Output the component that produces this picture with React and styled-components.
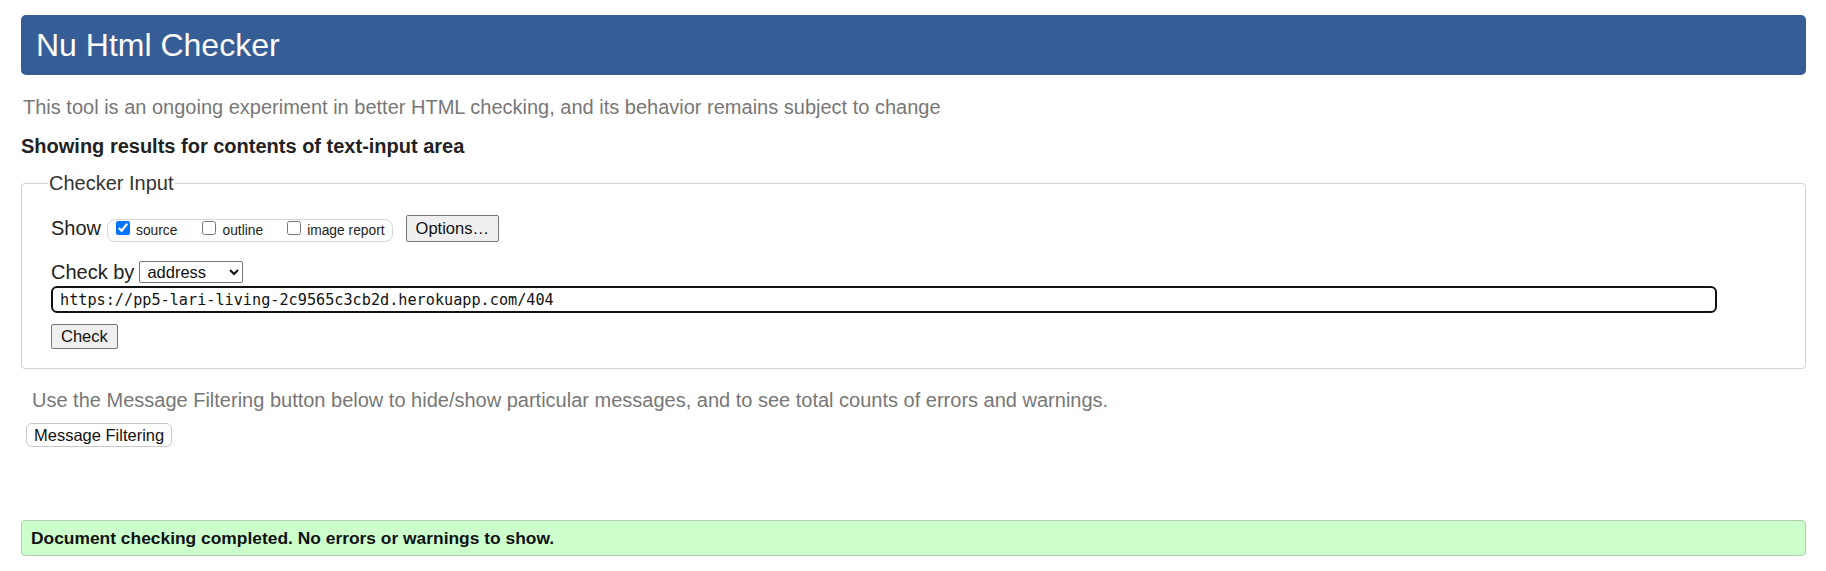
import React from 'react';
import styled, { createGlobalStyle } from 'styled-components';

const GlobalStyle = createGlobalStyle`
  body {
    margin: 0;
    background: #ffffff;
    font-family: "Liberation Sans", Arial, sans-serif;
    color: #222;
  }
`

const Page = styled.div`
  padding: 15px 20px 0 21px;
`

const Header = styled.h1`
  margin: 0;
  height: 60px;
  line-height: 60px;
  padding-left: 15px;
  background-color: #365d95;
  border-radius: 5px;
  color: #ffffff;
  font-size: 32px;
  font-weight: normal;
`

const Intro = styled.p`
  margin: 21px 0 0 2px;
  font-size: 20px;
  line-height: 23px;
  color: #777;
`

const Results = styled.h2`
  margin: 16px 0 0 0;
  font-size: 20px;
  line-height: 23px;
  font-weight: bold;
  color: #222;
`

const Fieldset = styled.fieldset`
  margin: 14px 0 0 0;
  padding: 0 24px 19px 29px;
  border: 1px solid #d2d2d2;
  border-radius: 4px;
`

const Legend = styled.legend`
  padding: 0 1px;
  margin-left: -3px;
  font-size: 20px;
  line-height: 23px;
  color: #333;
`

const Row = styled.div`
  display: flex;
  align-items: center;
  height: ${p => p.$height || 27}px;
  margin-top: ${p => p.$top || 0}px;
  font-size: 20px;
  color: #222;
`

const Label = styled.span`
  margin-right: ${p => p.$gap || 5}px;
`

const OptionGroup = styled.div`
  display: flex;
  align-items: center;
  box-sizing: border-box;
  height: 23px;
  margin-top: 3px;
  padding: 0 7px 0 8px;
  border: 1px solid #d6d6d6;
  border-radius: 8px;
  margin-right: 13px;
`

const Option = styled.label`
  display: flex;
  align-items: center;
  gap: 6px;
  font-size: 13.8px;
  color: #222;
  margin-right: ${p => p.$gap || 0}px;

  input {
    margin: 0 0 4px 0;
    width: 14px;
    height: 14px;
    accent-color: #0075ff;
  }
`

const Button = styled.button`
  box-sizing: border-box;
  font-family: "Liberation Sans", Arial, sans-serif;
  font-size: 16.5px;
  height: ${p => p.$height || 26}px;
  padding: 0 ${p => p.$pad || 8}px;
  color: #111;
  background: ${p => (p.$light ? '#ffffff' : '#efefef')};
  border: 1px solid ${p => (p.$light ? '#c8c8c8' : '#767676')};
  border-radius: ${p => (p.$light ? 6 : 2)}px;
`

const Select = styled.select`
  box-sizing: border-box;
  font-family: "Liberation Sans", Arial, sans-serif;
  font-size: 16.5px;
  height: 22px;
  width: 104px;
  padding: 0 3px;
  color: #111;
  background: #fff;
  border: 1px solid #767676;
  border-radius: 2px;
`

const UrlInput = styled.input`
  display: block;
  box-sizing: border-box;
  width: 1666px;
  height: 27px;
  margin-top: 3px;
  padding: 0 7px;
  font-family: "DejaVu Sans Mono", "Liberation Mono", monospace;
  font-size: 15.2px;
  color: #111;
  caret-color: #111;
  border: 2px solid #111;
  border-radius: 6px;
  outline: none;
`

const Hint = styled.p`
  margin: 20px 0 0 11px;
  font-size: 20px;
  line-height: 23px;
  color: #777;
`

const FilterWrap = styled.div`
  margin: 11px 0 0 5px;
`

const Success = styled.div`
  box-sizing: border-box;
  margin-top: 73px;
  height: 36px;
  padding-left: 9px;
  display: flex;
  align-items: center;
  background: #ccffcc;
  border: 1px solid #b0cfb0;
  border-radius: 4px;
  font-size: 17.4px;
  font-weight: bold;
  color: #111;
`

const App = () => {
  return (
    <Page>
      <GlobalStyle />
      <Header>Nu Html Checker</Header>
      <Intro>This tool is an ongoing experiment in better HTML checking, and its behavior remains subject to change</Intro>
      <Results>Showing results for contents of text-input area</Results>

      <Fieldset>
        <Legend>Checker Input</Legend>

        <Row $top={20} $height={27}>
          <Label $gap={6}>Show</Label>
          <OptionGroup>
            <Option $gap={25}><input type="checkbox" defaultChecked />source</Option>
            <Option $gap={24}><input type="checkbox" />outline</Option>
            <Option><input type="checkbox" />image report</Option>
          </OptionGroup>
          <Button $height={27} $pad={9}>Options…</Button>
        </Row>

        <Row $top={19} $height={22}>
          <Label $gap={5}>Check by</Label>
          <Select defaultValue="address">
            <option value="address">address</option>
            <option value="file">file upload</option>
            <option value="text">text input</option>
          </Select>
        </Row>

        <UrlInput defaultValue="https://pp5-lari-living-2c9565c3cb2d.herokuapp.com/404" />

        <Row $top={11} $height={25}>
          <Button $height={25} $pad={9}>Check</Button>
        </Row>
      </Fieldset>

      <Hint>Use the Message Filtering button below to hide/show particular messages, and to see total counts of errors and warnings.</Hint>
      <FilterWrap>
        <Button $light $height={24} $pad={7}>Message Filtering</Button>
      </FilterWrap>

      <Success>Document checking completed. No errors or warnings to show.</Success>
    </Page>
  );
};

export default App;
